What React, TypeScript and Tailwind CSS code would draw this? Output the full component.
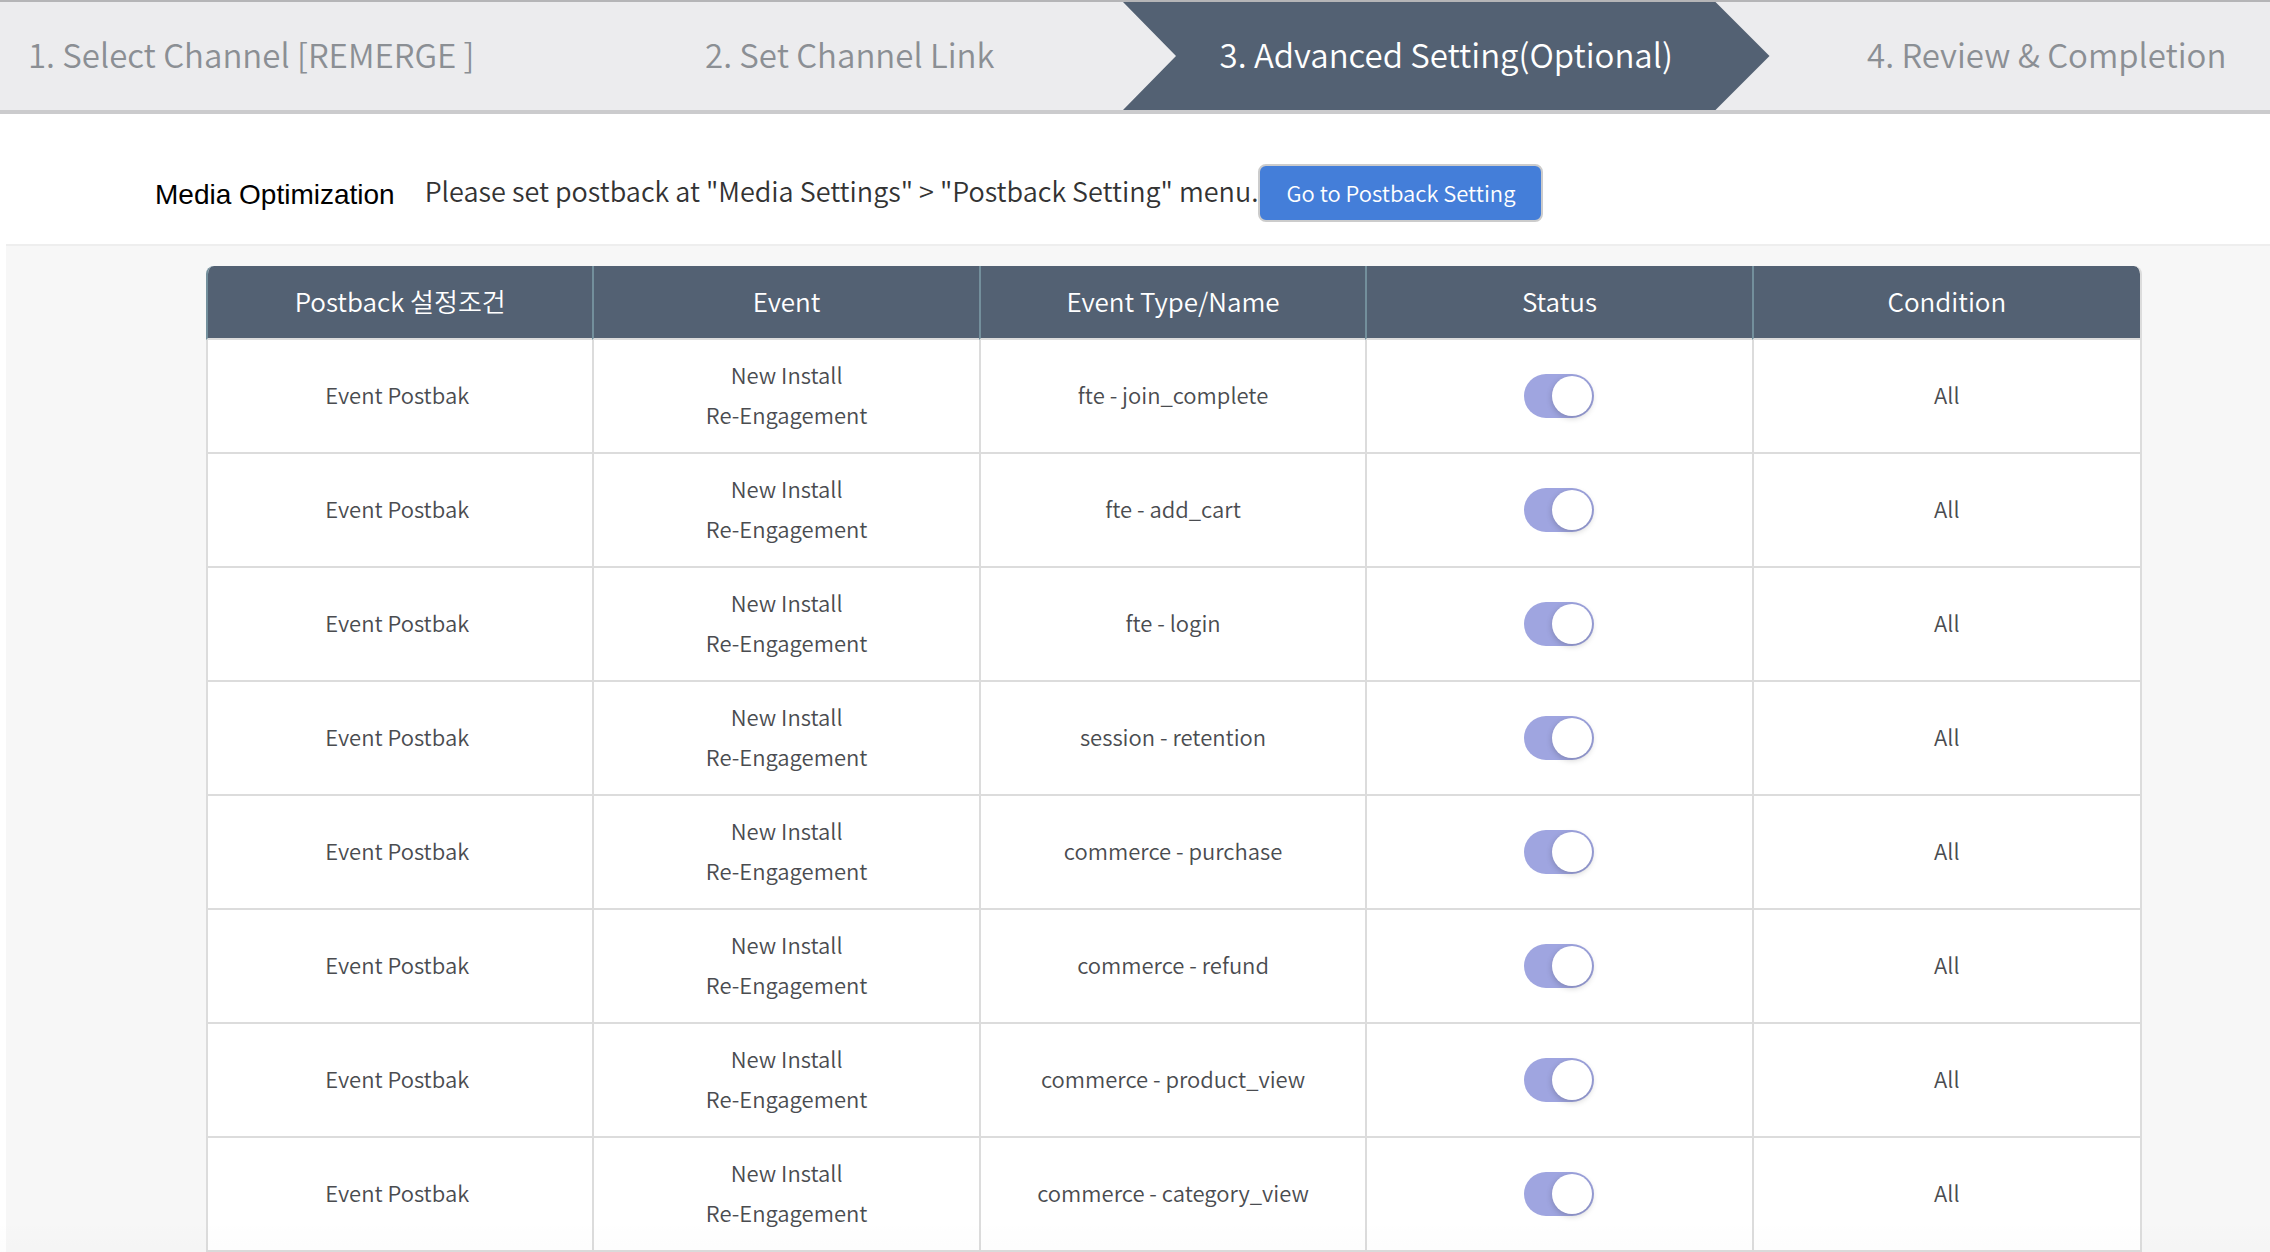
import React from "react";

const steps = [
  "1. Select Channel [REMERGE ]",
  "2. Set Channel Link",
  "3. Advanced Setting(Optional)",
  "4. Review & Completion",
];

const columns = ["Postback 설정조건", "Event", "Event Type/Name", "Status", "Condition"];

const rows = [
  "fte - join_complete",
  "fte - add_cart",
  "fte - login",
  "session - retention",
  "commerce - purchase",
  "commerce - refund",
  "commerce - product_view",
  "commerce - category_view",
];

function Steps() {
  return (
    <nav className="overflow-hidden border-t-2 border-b-4 border-t-[#b5b5b7] border-b-[#cbcbcd] bg-[#ececee]">
      <ol className="-ml-12 -mr-19 grid grid-cols-4 text-[33px] leading-[104px] text-[#8b8f94]">
        {steps.map((step, i) =>
          i === 2 ? (
            <li
              key={step}
              aria-current="step"
              className="-ml-[26px] -mr-[22px] whitespace-nowrap bg-[#536173] pb-1 text-center text-white [clip-path:polygon(0_0,calc(100%-54px)_0,100%_50%,calc(100%-54px)_100%,0_100%,53px_50%)]"
            >
              {step}
            </li>
          ) : (
            <li key={step} className="whitespace-nowrap pb-1 text-center">
              {step}
            </li>
          )
        )}
      </ol>
    </nav>
  );
}

export default function App() {
  return (
    <div className="relative bg-white font-['Noto_Sans_CJK_KR',sans-serif] font-[350]">
      <Steps />

      <div className="flex h-[130px] items-center pl-[155px] pt-7">
        <h2 className="pt-1 font-['Liberation_Sans',sans-serif] text-[28px] font-normal text-black">
          Media Optimization
        </h2>
        <p className="ml-[30px] pb-1 text-[27px] text-[#333]">
          Please set postback at "Media Settings" &gt; "Postback Setting" menu.
        </p>
        <button
          type="button"
          className="h-[58px] rounded-lg border-2 border-[#ccc] bg-[#447ed9] px-[26px] pb-[2px] text-[22px] leading-none text-white"
        >
          Go to Postback Setting
        </button>
      </div>

      <div className="ml-[6px] border-t-2 border-[#eee] bg-[#f7f7f7] pl-[200px] pr-32 pt-5">
        <table className="w-full table-fixed border-separate border-spacing-0 text-center">
          <thead>
            <tr className="h-[74px] text-[26px] leading-10 text-white">
              {columns.map((name) => (
                <th
                  key={name}
                  className="w-[19.96%] border-b-2 border-l-2 border-b-[#dcdcdc] border-l-[#738f9c] bg-[#536173] bg-clip-padding pb-[2px] font-[350] first:rounded-tl-lg last:w-auto last:rounded-tr-lg last:border-r-2 last:border-r-[#dcdcdc]"
                >
                  {name}
                </th>
              ))}
            </tr>
          </thead>
          <tbody className="text-[22px] leading-10 text-[#4a4c50]">
            {rows.map((name) => (
              <tr
                key={name}
                className="h-[114px] *:border-b-2 *:border-l-2 *:border-[#dcdcdc] *:bg-white *:pb-1 *:first:pr-1.5 *:last:border-r-2"
              >
                <td>Event Postbak</td>
                <td>
                  New Install
                  <br />
                  Re-Engagement
                </td>
                <td>{name}</td>
                <td>
                  <input
                    type="checkbox"
                    defaultChecked
                    aria-label={name}
                    className="mx-auto mt-1 block h-11 w-[70px] appearance-none rounded-full bg-[#9fa5e0] p-[2px] before:block before:size-10 before:rounded-full before:bg-white before:shadow-[0_2px_6px_rgba(0,0,0,0.2)] checked:before:ml-auto"
                  />
                </td>
                <td>All</td>
              </tr>
            ))}
          </tbody>
        </table>
      </div>

      <div className="pointer-events-none absolute inset-x-0 bottom-0 h-8 bg-linear-to-b from-black/0 to-black/1" />
    </div>
  );
}
